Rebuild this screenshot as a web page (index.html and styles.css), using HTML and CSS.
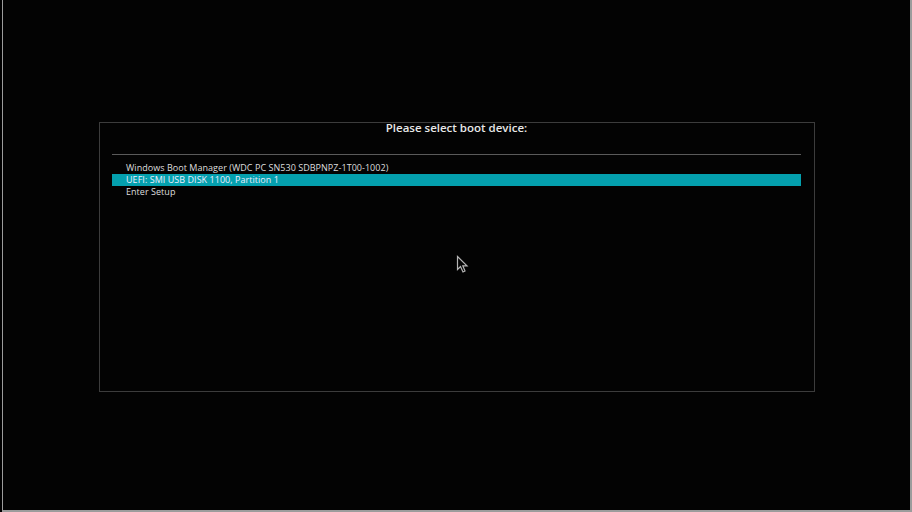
FILE: index.html
```html
<!DOCTYPE html>
<html>
<head>
    <meta charset="utf-8">
    <title>Boot Menu</title>
    <link rel="stylesheet" href="styles.css">
</head>
<body>
    <div class="screen">
        <div class="boot-box">
            <div class="title">Please select boot device:</div>
            <div class="separator"></div>
            <ul class="device-list">
                <li>Windows Boot Manager (WDC PC SN530 SDBPNPZ-1T00-1002)</li>
                <li class="selected">UEFI: SMI USB DISK 1100, Partition 1</li>
                <li>Enter Setup</li>
            </ul>
        </div>

        <!-- mouse pointer -->
        <svg class="pointer" width="14" height="20" viewBox="0 0 14 20">
            <path d="M1.5 1.5 L1.5 14.5 L4.5 11.5 L7 17 L9 16 L6.8 10.8 L11 10.8 Z" fill="#050505" stroke="#b5b5b5" stroke-width="1.2" stroke-linejoin="miter"/>
        </svg>
    </div>
</body>
</html>
```

FILE: styles.css
```css
html, body {
    margin: 0;
    padding: 0;
    background: #000;
}

body {
    font-family: "Open Sans", "Noto Sans", sans-serif;
    color: #e2e2e2;
}

.screen {
    position: relative;
    width: 907px;
    height: 510px;
    margin-left: 2px;
    background: #030303;
    border-left: 1px solid #9c9c9c;
    border-right: 2px solid #9c9c9c;
    border-bottom: 2px solid #9c9c9c;
    overflow: hidden;
}

.boot-box {
    box-sizing: border-box;
    width: 716px;
    height: 270px;
    margin: 122px 0 0 96px;
    border: 1px solid #3c3c3c;
    padding: 0 13px 0 12px;
}

.title {
    text-align: center;
    font-size: 11.5px;
    font-weight: 600;
    line-height: 12px;
    margin-top: -1px;
    color: #e8e8e8;
}

.separator {
    height: 1px;
    background: #5a5a5a;
    margin-top: 20px;
}

.device-list {
    list-style: none;
    margin: 7px 0 0 0;
    padding: 0;
}

.device-list li {
    height: 12px;
    line-height: 12px;
    font-size: 9px;
    letter-spacing: 0.04px;
    padding-left: 14px;
    color: #dedede;
}

.device-list li.selected {
    background: #04a0ae;
    color: #eef;
}

.pointer {
    position: absolute;
    left: 453px;
    top: 255px;
}
```
